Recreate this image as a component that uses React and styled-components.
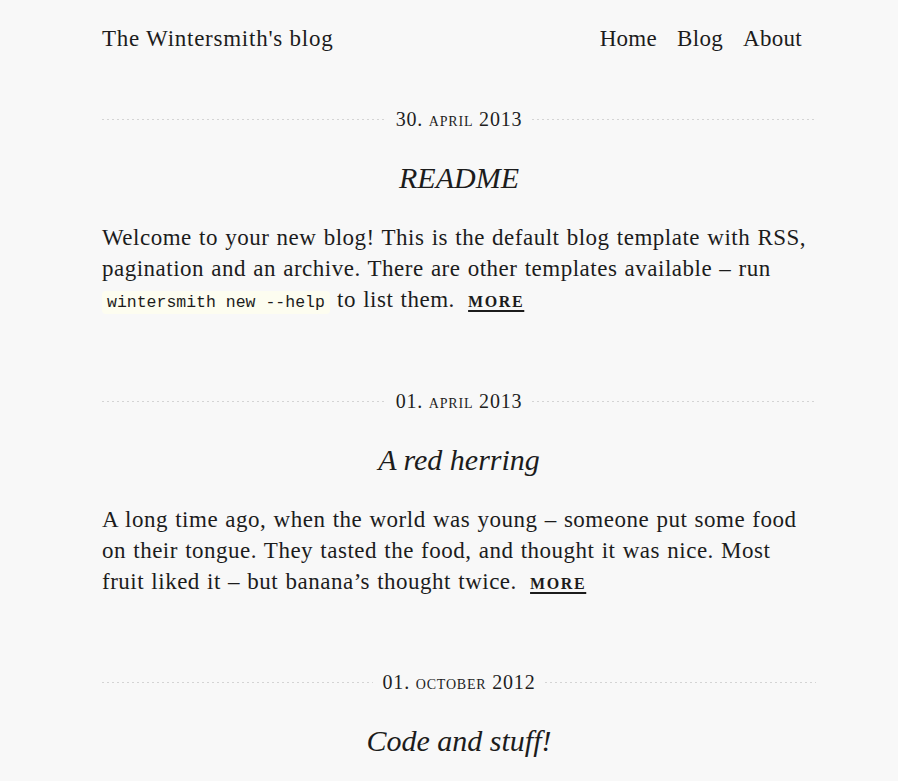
import styled, { createGlobalStyle } from "styled-components";

const GlobalStyle = createGlobalStyle`
  html, body {
    margin: 0;
    padding: 0;
    background: #f8f8f8;
  }
  body {
    font-family: "Liberation Serif", "DejaVu Serif", serif;
    color: #1c1c1c;
  }
`;

const Page = styled.div`
  width: 714px;
  margin-left: 102px;
  padding-top: 24px;
`;

const Header = styled.header`
  display: flex;
  justify-content: space-between;
  align-items: center;
  height: 30px;
  padding-right: 14px;
  margin-bottom: 52px;
`;

const SiteTitle = styled.a`
  font-size: 23px;
  color: #1c1c1c;
  text-decoration: none;
  letter-spacing: 0.75px;
`;

const Nav = styled.nav`
  display: flex;
  gap: 20px;
`;

const NavLink = styled.a`
  font-size: 23px;
  color: #1c1c1c;
  text-decoration: none;
  letter-spacing: 0.3px;
`;

const Article = styled.article`
  margin-bottom: 70px;
`;

const DateRow = styled.div`
  display: flex;
  align-items: center;
  gap: 10px;
  height: 26px;

  &::before,
  &::after {
    content: "";
    flex: 1;
    height: 1px;
    background-image: linear-gradient(to right, #d4d4d4 50%, transparent 50%);
    background-size: 5px 1px;
  }
`;

const DateText = styled.time`
  font-size: 20px;
  font-variant: small-caps;
  letter-spacing: 0.8px;
  color: #1e1e1e;
`;

const Title = styled.h2`
  margin: 28px 0 0;
  text-align: center;
  font-size: 30px;
  font-weight: normal;
  font-style: italic;
  line-height: 36px;
  color: #1c1c1c;
`;

const Body = styled.p`
  margin: 26px 0 0;
  font-size: 23px;
  line-height: 31px;
  letter-spacing: 0.5px;
  word-spacing: 1px;
`;

const Code = styled.code`
  font-family: "Liberation Mono", "DejaVu Sans Mono", monospace;
  font-size: 16.5px;
  background: #fdfdf0;
  border-radius: 4px;
  padding: 2px 5px;
  letter-spacing: 0;
  word-spacing: 0;
`;

const More = styled.a`
  margin-left: 6px;
  font-size: 16px;
  font-weight: bold;
  text-transform: uppercase;
  letter-spacing: 1.6px;
  color: #1c1c1c;
  text-decoration: underline;
  text-underline-offset: 3px;
  text-decoration-thickness: 2px;
`;

const articles = [
  {
    date: "30. april 2013",
    title: "README",
    body: (
      <>
        Welcome to your new blog! This is the default blog template with RSS,
        pagination and an archive. There are other templates available – run{" "}
        <Code>wintersmith new --help</Code> to list them.
      </>
    ),
  },
  {
    date: "01. april 2013",
    title: "A red herring",
    body: (
      <>
        A long time ago, when the world was young – someone put some food on
        their tongue. They tasted the food, and thought it was nice. Most fruit
        liked it – but banana’s thought twice.
      </>
    ),
  },
  {
    date: "01. october 2012",
    title: "Code and stuff!",
    body: null,
  },
];

export default function App() {
  return (
    <>
      <GlobalStyle />
      <Page>
        <Header>
          <SiteTitle href="#">The Wintersmith's blog</SiteTitle>
          <Nav>
            <NavLink href="#">Home</NavLink>
            <NavLink href="#">Blog</NavLink>
            <NavLink href="#">About</NavLink>
          </Nav>
        </Header>
        {articles.map((a) => (
          <Article key={a.title}>
            <DateRow>
              <DateText>{a.date}</DateText>
            </DateRow>
            <Title>{a.title}</Title>
            {a.body && (
              <Body>
                {a.body} <More href="#">More</More>
              </Body>
            )}
          </Article>
        ))}
      </Page>
    </>
  );
}
